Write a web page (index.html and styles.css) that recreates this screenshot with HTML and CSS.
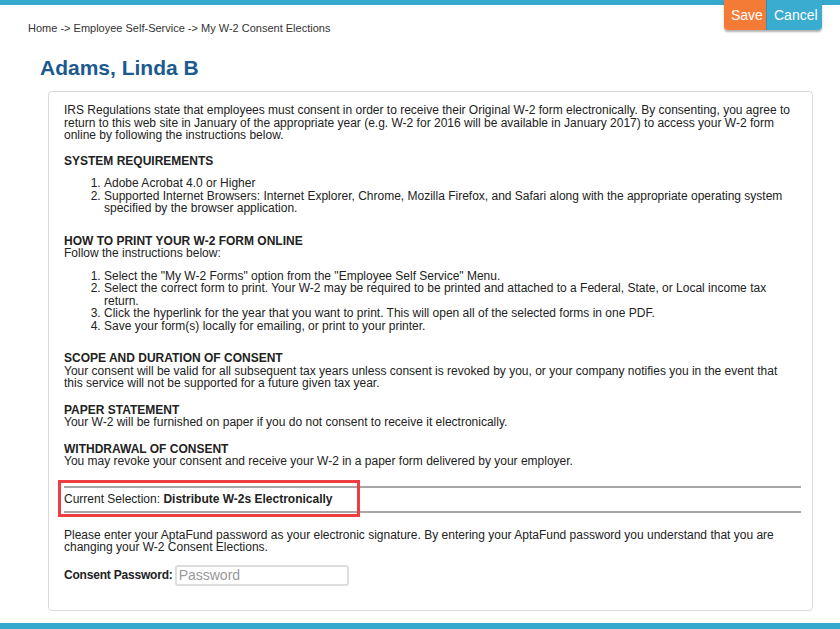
FILE: index.html
```html
<!DOCTYPE html>
<html lang="en">
<head>
    <meta charset="UTF-8">
    <meta name="viewport" content="width=device-width, initial-scale=1.0">
    <title>My W-2 Consent Elections</title>
    <link rel="stylesheet" href="styles.css">
</head>
<body>

    <div class="top-bar"></div>

    <div class="actions">
        <button class="btn btn-save">Save</button>
        <button class="btn btn-cancel">Cancel</button>
    </div>

    <div class="page">
        <div class="breadcrumb">Home -&gt; Employee Self-Service -&gt; My W-2 Consent Elections</div>
        <h1 class="employee-name">Adams, Linda B</h1>

        <div class="panel">
            <p>IRS Regulations state that employees must consent in order to receive their Original W-2 form electronically. By consenting, you agree to return to this web site in January of the appropriate year (e.g. W-2 for 2016 will be available in January 2017) to access your W-2 form online by following the instructions below.</p>

            <h2 class="section-title">SYSTEM REQUIREMENTS</h2>
            <ol class="steps">
                <li>Adobe Acrobat 4.0 or Higher</li>
                <li>Supported Internet Browsers: Internet Explorer, Chrome, Mozilla Firefox, and Safari along with the appropriate operating system specified by the browser application.</li>
            </ol>

            <h2 class="section-title">HOW TO PRINT YOUR W-2 FORM ONLINE</h2>
            <p class="after-title lead-in">Follow the instructions below:</p>
            <ol class="steps">
                <li>Select the "My W-2 Forms" option from the "Employee Self Service" Menu.</li>
                <li>Select the correct form to print. Your W-2 may be required to be printed and attached to a Federal, State, or Local income tax return.</li>
                <li>Click the hyperlink for the year that you want to print. This will open all of the selected forms in one PDF.</li>
                <li>Save your form(s) locally for emailing, or print to your printer.</li>
            </ol>

            <h2 class="section-title">SCOPE AND DURATION OF CONSENT</h2>
            <p class="after-title">Your consent will be valid for all subsequent tax years unless consent is revoked by you, or your company notifies you in the event that this service will not be supported for a future given tax year.</p>

            <h2 class="section-title">PAPER STATEMENT</h2>
            <p class="after-title">Your W-2 will be furnished on paper if you do not consent to receive it electronically.</p>

            <h2 class="section-title">WITHDRAWAL OF CONSENT</h2>
            <p class="after-title">You may revoke your consent and receive your W-2 in a paper form delivered by your employer.</p>

            <div class="selection">
                Current Selection: <strong>Distribute W-2s Electronically</strong>
                <div class="highlight"></div>
            </div>

            <p class="signature-note">Please enter your AptaFund password as your electronic signature. By entering your AptaFund password you understand that you are changing your W-2 Consent Elections.</p>

            <div class="password-row">
                <label for="consent-password">Consent Password:</label>
                <input type="password" id="consent-password" class="password-input" placeholder="Password">
            </div>
        </div>
    </div>

    <div class="bottom-bar"></div>

</body>
</html>
```

FILE: styles.css
```css
body {
    margin: 0;
    font-family: "Liberation Sans", Arial, sans-serif;
    font-size: 12px;
    color: #222;
    background-color: #fff;
    height: 629px;
    position: relative;
    overflow: hidden;
}
.top-bar {
    height: 5px;
    background-color: #35a9cd;
}
.bottom-bar {
    position: absolute;
    left: 0;
    right: 0;
    bottom: 0;
    height: 6px;
    background-color: #35a9cd;
}
.actions {
    position: absolute;
    top: 0;
    left: 724px;
    display: flex;
    border-radius: 0 0 4px 4px;
    box-shadow: 0 2px 2px rgba(0, 0, 0, 0.3);
    overflow: hidden;
}
.btn {
    border: none;
    height: 30px;
    padding: 0 7px;
    font-family: "Liberation Sans", Arial, sans-serif;
    font-size: 14px;
    color: #fff;
    cursor: pointer;
}
.btn-save {
    width: 42px;
    background-color: #f47b36;
}
.btn-cancel {
    width: 56px;
    background-color: #39acd0;
    border-left: 1px solid #2f93b3;
}
.page {
    padding: 0 28px;
}
.breadcrumb {
    margin-top: 16px;
    font-size: 11px;
    line-height: 14px;
    color: #333;
}
.employee-name {
    margin: 20px 0 0 12px;
    font-size: 21px;
    line-height: 26px;
    color: #1b5a8e;
}
.panel {
    margin: 10px 0 0 20px;
    width: 733px;
    height: 506px;
    padding: 12px 15px 0 15px;
    border: 1px solid #d9d9d9;
    border-radius: 4px;
    line-height: 12.5px;
}
.panel p {
    margin: 0 0 13px 0;
}
.section-title {
    margin: 0;
    font-size: 12px;
    line-height: 12.5px;
    font-weight: bold;
}
.panel p.after-title {
    margin-bottom: 14px;
}
.panel p.lead-in {
    margin-bottom: 0;
}
.steps {
    margin: 10px 0 20px 0;
    padding-left: 40px;
}
.selection {
    position: relative;
    margin: 18px -4px 16px 0;
    padding: 5px 0;
    border-top: 2px solid #a6a6a6;
    border-bottom: 2px solid #a6a6a6;
    line-height: 13px;
}
.highlight {
    position: absolute;
    left: -6px;
    top: -8px;
    width: 296px;
    height: 31px;
    border: 3px solid #ee3e42;
}
.panel p.signature-note {
    margin-bottom: 11px;
}
.password-row {
    display: flex;
    align-items: center;
    gap: 2px;
}
.password-row label {
    font-weight: bold;
    letter-spacing: -0.2px;
}
.password-input {
    width: 166px;
    height: 15px;
    padding: 1px 2px;
    border: 2px solid #ddd;
    border-radius: 3px;
    font-family: "Liberation Sans", Arial, sans-serif;
    font-size: 14px;
}
.password-input::placeholder {
    color: #999;
}
```
